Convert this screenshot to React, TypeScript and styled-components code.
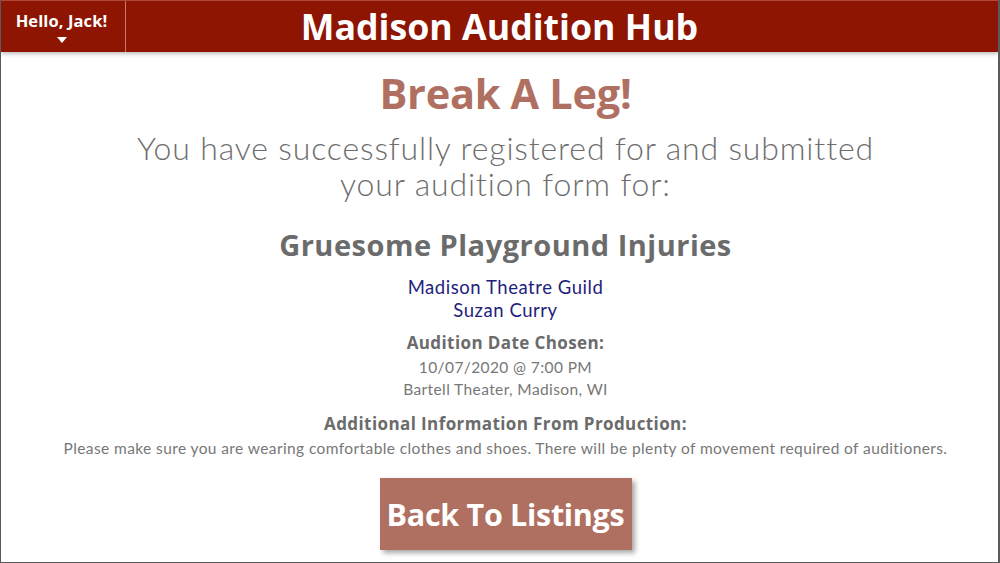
import React from "react";
import styled, { createGlobalStyle } from "styled-components";

const Global = createGlobalStyle`
  html, body { margin: 0; padding: 0; background: #ffffff; }
  body { font-family: "Lato", "Open Sans", sans-serif; }
`;

const Frame = styled.div`
  width: 1000px;
  height: 563px;
  box-sizing: border-box;
  border-left: 1px solid #5a5a5a;
  border-right: 2px solid #5a5a5a;
  border-bottom: 1px solid #5a5a5a;
  display: flex;
  flex-direction: column;
  overflow: hidden;
  background: #fff;
`;

const Header = styled.header`
  height: 52px;
  flex: none;
  background: #8d1502;
  border-top: 1px solid #b0473a;
  box-sizing: border-box;
  display: grid;
  grid-template-columns: 125px 1fr 125px;
  box-shadow: 0 2px 4px rgba(0, 0, 0, 0.25);
  position: relative;
  z-index: 1;
`;

const Greeting = styled.div`
  border-right: 1px solid #c77a6e;
  display: flex;
  flex-direction: column;
  align-items: center;
  padding-top: 10px;
  color: #fff;
  font-family: "Open Sans", sans-serif;
  font-weight: 700;
  font-size: 16.5px;
  letter-spacing: 0.1px;
  line-height: 20px;
  padding-right: 3px;
`;

const Caret = styled.div`
  width: 0;
  height: 0;
  border-left: 5px solid transparent;
  border-right: 5px solid transparent;
  border-top: 6px solid #fff;
  margin-top: 6px;
`;

const Title = styled.h1`
  margin: 0;
  text-align: center;
  color: #fff;
  font-family: "Open Sans", sans-serif;
  font-weight: 700;
  font-size: 35.7px;
  line-height: 52px;
  margin-top: -1px;
`;

const Main = styled.main`
  flex: 1;
  display: flex;
  flex-direction: column;
  align-items: center;
  text-align: center;
  padding-top: 17px;
  padding-left: 12px;
`;

const Headline = styled.h2`
  margin: 0;
  color: #b07061;
  font-family: "Open Sans", sans-serif;
  font-weight: 700;
  font-size: 41.5px;
  line-height: 48px;
  letter-spacing: -0.3px;
`;

const Intro = styled.p`
  margin: 13px 0 0;
  color: #6e6e6e;
  font-family: "Lato", sans-serif;
  font-weight: 300;
  font-size: 32px;
  line-height: 36px;
  letter-spacing: 0.84px;
`;

const Show = styled.h3`
  margin: 26px 0 0;
  color: #6b6b6b;
  font-family: "Open Sans", sans-serif;
  font-weight: 700;
  font-size: 29px;
  line-height: 34px;
  letter-spacing: 0.5px;
`;

const Company = styled.div`
  margin-top: 14px;
  color: #1e227c;
  font-family: "Lato", sans-serif;
  font-weight: 400;
  font-size: 18.5px;
  line-height: 23px;
  letter-spacing: 0.55px;
`;

const Label = styled.div<{ $gap: number }>`
  margin-top: ${(p) => p.$gap}px;
  color: #6b6b6b;
  font-family: "Open Sans", sans-serif;
  font-weight: 700;
  font-size: 17px;
  line-height: 26px;
  letter-spacing: 0.4px;
`;

const Detail = styled.div`
  color: #777777;
  font-family: "Lato", sans-serif;
  font-weight: 400;
  font-size: 15.5px;
  line-height: 22px;
  letter-spacing: 0.4px;
`;

const BackButton = styled.button`
  margin-top: 19px;
  width: 252px;
  height: 72px;
  border: none;
  background: #b07061;
  color: #fff;
  font-family: "Open Sans", sans-serif;
  font-weight: 700;
  font-size: 30.5px;
  letter-spacing: -0.3px;
  box-shadow: 3px 3px 5px rgba(0, 0, 0, 0.35);
  cursor: pointer;
  padding: 0;
`;

export default function App() {
  return (
    <>
      <Global />
      <Frame>
        <Header>
          <Greeting>
            <span>Hello, Jack!</span>
            <Caret />
          </Greeting>
          <Title>Madison Audition Hub</Title>
          <div />
        </Header>
        <Main>
          <Headline>Break A Leg!</Headline>
          <Intro>
            You have successfully registered for and submitted
            <br />
            your audition form for:
          </Intro>
          <Show>Gruesome Playground Injuries</Show>
          <Company>
            Madison Theatre Guild
            <br />
            Suzan Curry
          </Company>
          <Label $gap={8}>Audition Date Chosen:</Label>
          <Detail>10/07/2020 @ 7:00 PM</Detail>
          <Detail>Bartell Theater, Madison, WI</Detail>
          <Label $gap={11}>Additional Information From Production:</Label>
          <Detail>
            Please make sure you are wearing comfortable clothes and shoes. There will be plenty of movement
            required of auditioners.
          </Detail>
          <BackButton>Back To Listings</BackButton>
        </Main>
      </Frame>
    </>
  );
}
